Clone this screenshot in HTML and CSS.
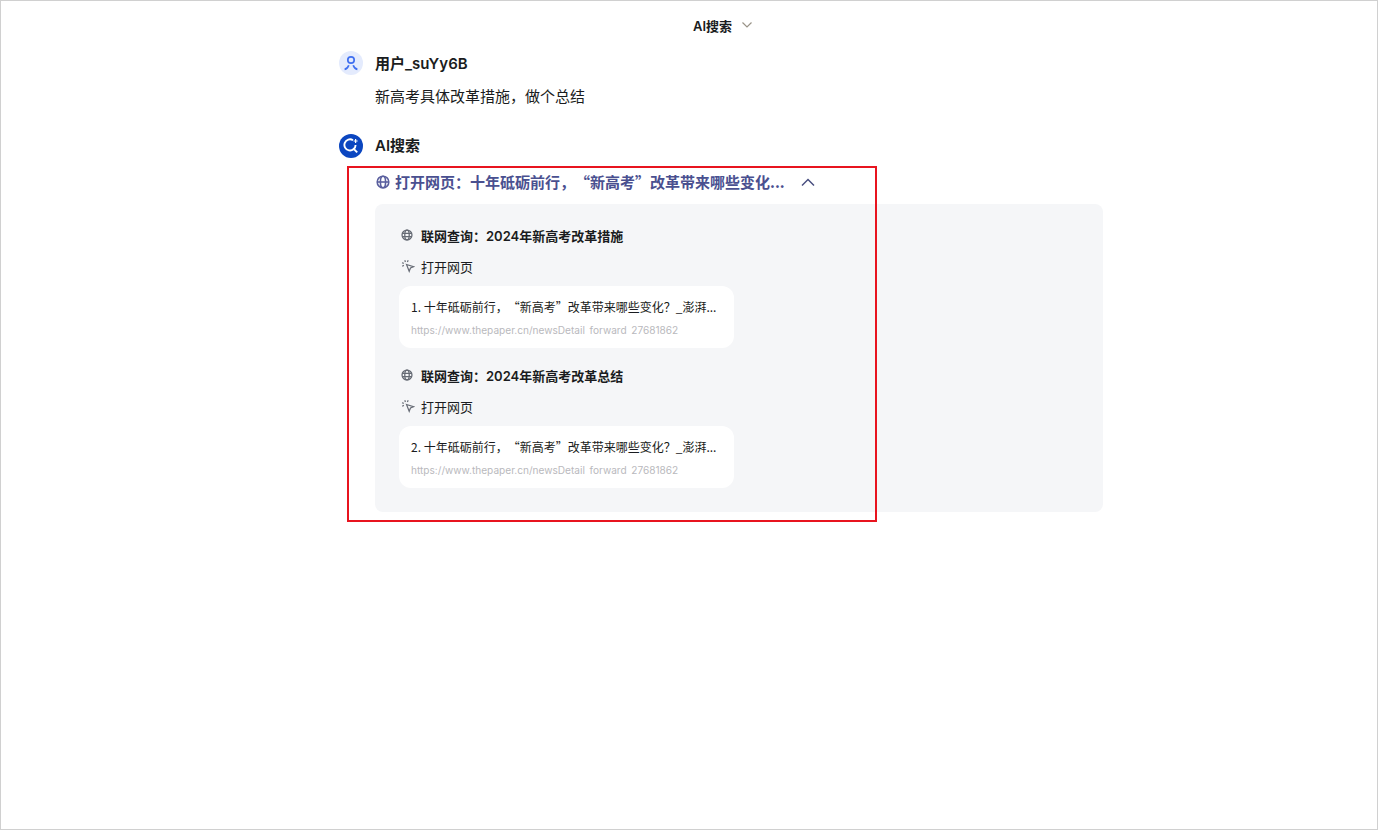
FILE: index.html
```html
<!DOCTYPE html>
<html lang="zh-CN">
<head>
    <meta charset="UTF-8">
    <meta name="viewport" content="width=device-width, initial-scale=1.0">
    <title>AI搜索</title>
    <link rel="stylesheet" href="styles.css">
</head>
<body>
    <div class="page">
        <div class="top-bar">
            <span class="top-title">AI搜索</span>
            <svg class="top-arrow" width="12" height="8" viewBox="0 0 12 8"><path d="M1.5 1.5l4.5 4.5 4.5-4.5" fill="none" stroke="#9a9488" stroke-width="1.2"/></svg>
        </div>

        <div class="chat">
            <div class="msg-head">
                <span class="avatar avatar-user">
                    <svg width="16" height="16" viewBox="0 0 16 16" fill="none" stroke="#3f6ff0" stroke-width="1.7"><circle cx="8" cy="5" r="3.2"/><path d="M1.6 14.4c1.8-.4 3.4-2 4.2-4.2M14.4 14.4c-1.8-.4-3.4-2-4.2-4.2"/></svg>
                </span>
                <span class="msg-name">用户_suYy6B</span>
            </div>
            <p class="question">新高考具体改革措施，做个总结</p>

            <div class="msg-head msg-head-ai">
                <span class="avatar avatar-ai">
                    <svg width="16" height="16" viewBox="0 0 16 16" fill="none" stroke="#fff" stroke-width="1.9"><path d="M10 2.2A5.6 5.6 0 1 0 12.6 7"/><path d="M10.2 10.4l4 4"/><path d="M12.6 1v4M10.6 3h4" stroke-width="1.2"/></svg>
                </span>
                <span class="msg-name">AI搜索</span>
            </div>

            <div class="steps">
                <div class="steps-head">
                    <svg class="steps-icon" width="14" height="14" viewBox="0 0 14 14" fill="none" stroke="#5a5f9e" stroke-width="1.6"><circle cx="7" cy="7" r="5.8"/><ellipse cx="7" cy="7" rx="2.6" ry="5.8"/><path d="M1.2 7h11.6"/></svg>
                    <span class="steps-title">打开网页：十年砥砺前行，“新高考”改革带来哪些变化...</span>
                    <svg class="steps-arrow" width="14" height="9" viewBox="0 0 14 9"><path d="M1 7.5l6-6 6 6" fill="none" stroke="#4a5080" stroke-width="1.5"/></svg>
                </div>

                <div class="steps-body">
                    <div class="step">
                        <div class="step-row step-search">
                            <svg width="12" height="12" viewBox="0 0 14 14" fill="none" stroke="#666b75" stroke-width="1.5"><circle cx="7" cy="7" r="5.8"/><ellipse cx="7" cy="7" rx="2.6" ry="5.8"/><path d="M1.2 5h11.6M1.2 9h11.6"/></svg>
                            <span>联网查询：2024年新高考改革措施</span>
                        </div>
                        <div class="step-row step-open">
                            <svg width="14" height="14" viewBox="0 0 14 14" fill="none" stroke="#666b75" stroke-width="1.2"><path d="M5.5 5.5l7 2.2-3 1.3-1.3 3.3z"/><path d="M3.8 1.2l.6 1.8M1 3.8l1.8.6M1.2 7.2l1.7-.8M7.2 1.2l-.8 1.7"/></svg>
                            <span>打开网页</span>
                        </div>
                        <div class="source">
                            <div class="source-title">1. 十年砥砺前行，“新高考”改革带来哪些变化？_澎湃...</div>
                            <div class="source-url">https://www.thepaper.cn/newsDetail<span class="url-sep">_</span>forward<span class="url-sep">_</span>27681862</div>
                        </div>
                    </div>

                    <div class="step">
                        <div class="step-row step-search">
                            <svg width="12" height="12" viewBox="0 0 14 14" fill="none" stroke="#666b75" stroke-width="1.5"><circle cx="7" cy="7" r="5.8"/><ellipse cx="7" cy="7" rx="2.6" ry="5.8"/><path d="M1.2 5h11.6M1.2 9h11.6"/></svg>
                            <span>联网查询：2024年新高考改革总结</span>
                        </div>
                        <div class="step-row step-open">
                            <svg width="14" height="14" viewBox="0 0 14 14" fill="none" stroke="#666b75" stroke-width="1.2"><path d="M5.5 5.5l7 2.2-3 1.3-1.3 3.3z"/><path d="M3.8 1.2l.6 1.8M1 3.8l1.8.6M1.2 7.2l1.7-.8M7.2 1.2l-.8 1.7"/></svg>
                            <span>打开网页</span>
                        </div>
                        <div class="source">
                            <div class="source-title">2. 十年砥砺前行，“新高考”改革带来哪些变化？_澎湃...</div>
                            <div class="source-url">https://www.thepaper.cn/newsDetail<span class="url-sep">_</span>forward<span class="url-sep">_</span>27681862</div>
                        </div>
                    </div>
                </div>

                <div class="highlight"></div>
            </div>
        </div>
    </div>
</body>
</html>
```

FILE: styles.css
```css
* {
    margin: 0;
    padding: 0;
    box-sizing: border-box;
}

html, body {
    height: 100%;
}

body {
    font-family: Inter, "Noto Sans CJK SC", sans-serif;
    background-color: #fff;
    color: #1a1c20;
    overflow: hidden;
    text-spacing-trim: space-all;
}

.page {
    height: 830px;
    border: 1px solid #d0d0d0;
    padding-top: 14px;
}

.top-bar {
    display: flex;
    justify-content: center;
    align-items: center;
    gap: 9px;
    height: 20px;
    margin-left: 68px;
}

.top-title {
    font-size: 13px;
    font-weight: 600;
}

.chat {
    width: 764px;
    margin: 16px 0 0 338px;
}

.msg-head {
    display: flex;
    align-items: center;
    gap: 12px;
    height: 24px;
}

.msg-head-ai {
    margin-top: 26px;
}

.avatar {
    display: flex;
    align-items: center;
    justify-content: center;
    width: 24px;
    height: 24px;
    border-radius: 50%;
}

.avatar-user {
    background-color: #e4ebfd;
}

.avatar-ai {
    background-color: #0b46c0;
}

.msg-name {
    margin-top: -2px;
    font-size: 15px;
    font-weight: 600;
}

.msg-head-ai .msg-name {
    margin-top: -4px;
}

.question {
    margin: 11px 0 0 36px;
    font-size: 15px;
    line-height: 22px;
}

.steps {
    position: relative;
    margin: 12px 0 0 36px;
}

.steps-head {
    display: flex;
    align-items: center;
    height: 24px;
    color: #4a5090;
    font-family: "Noto Sans CJK SC", sans-serif;
    font-size: 15px;
    font-weight: 600;
}

.steps-icon {
    margin-left: 1px;
}

.steps-title {
    margin: -2px 0 0 5px;
}

.steps-arrow {
    margin-left: 16px;
}

.steps-body {
    margin-top: 10px;
    padding: 19px 24px 24px;
    background-color: #f5f6f8;
    border-radius: 8px;
}

.step + .step {
    margin-top: 15px;
}

.step-row {
    display: flex;
    align-items: center;
    gap: 8px;
    height: 24px;
    margin-bottom: 7px;
    padding-left: 2px;
    font-size: 13px;
}

.step-search {
    font-weight: 600;
}

.step-open {
    gap: 6px;
}

.source {
    width: 335px;
    height: 62px;
    margin-top: 8px;
    padding: 11px 12px 0;
    background-color: #fff;
    border-radius: 12px;
}

.source-title {
    font-family: "Noto Sans CJK SC", sans-serif;
    font-size: 12px;
    line-height: 20px;
    white-space: nowrap;
}

.source-url {
    margin-top: 9px;
    color: #b9b9bd;
    font-size: 10.1px;
    line-height: 9px;
    white-space: nowrap;
}

.url-sep {
    color: transparent;
}

.highlight {
    position: absolute;
    left: -28px;
    top: -4px;
    width: 530px;
    height: 356px;
    border: 2px solid #e8141f;
    pointer-events: none;
}
```
